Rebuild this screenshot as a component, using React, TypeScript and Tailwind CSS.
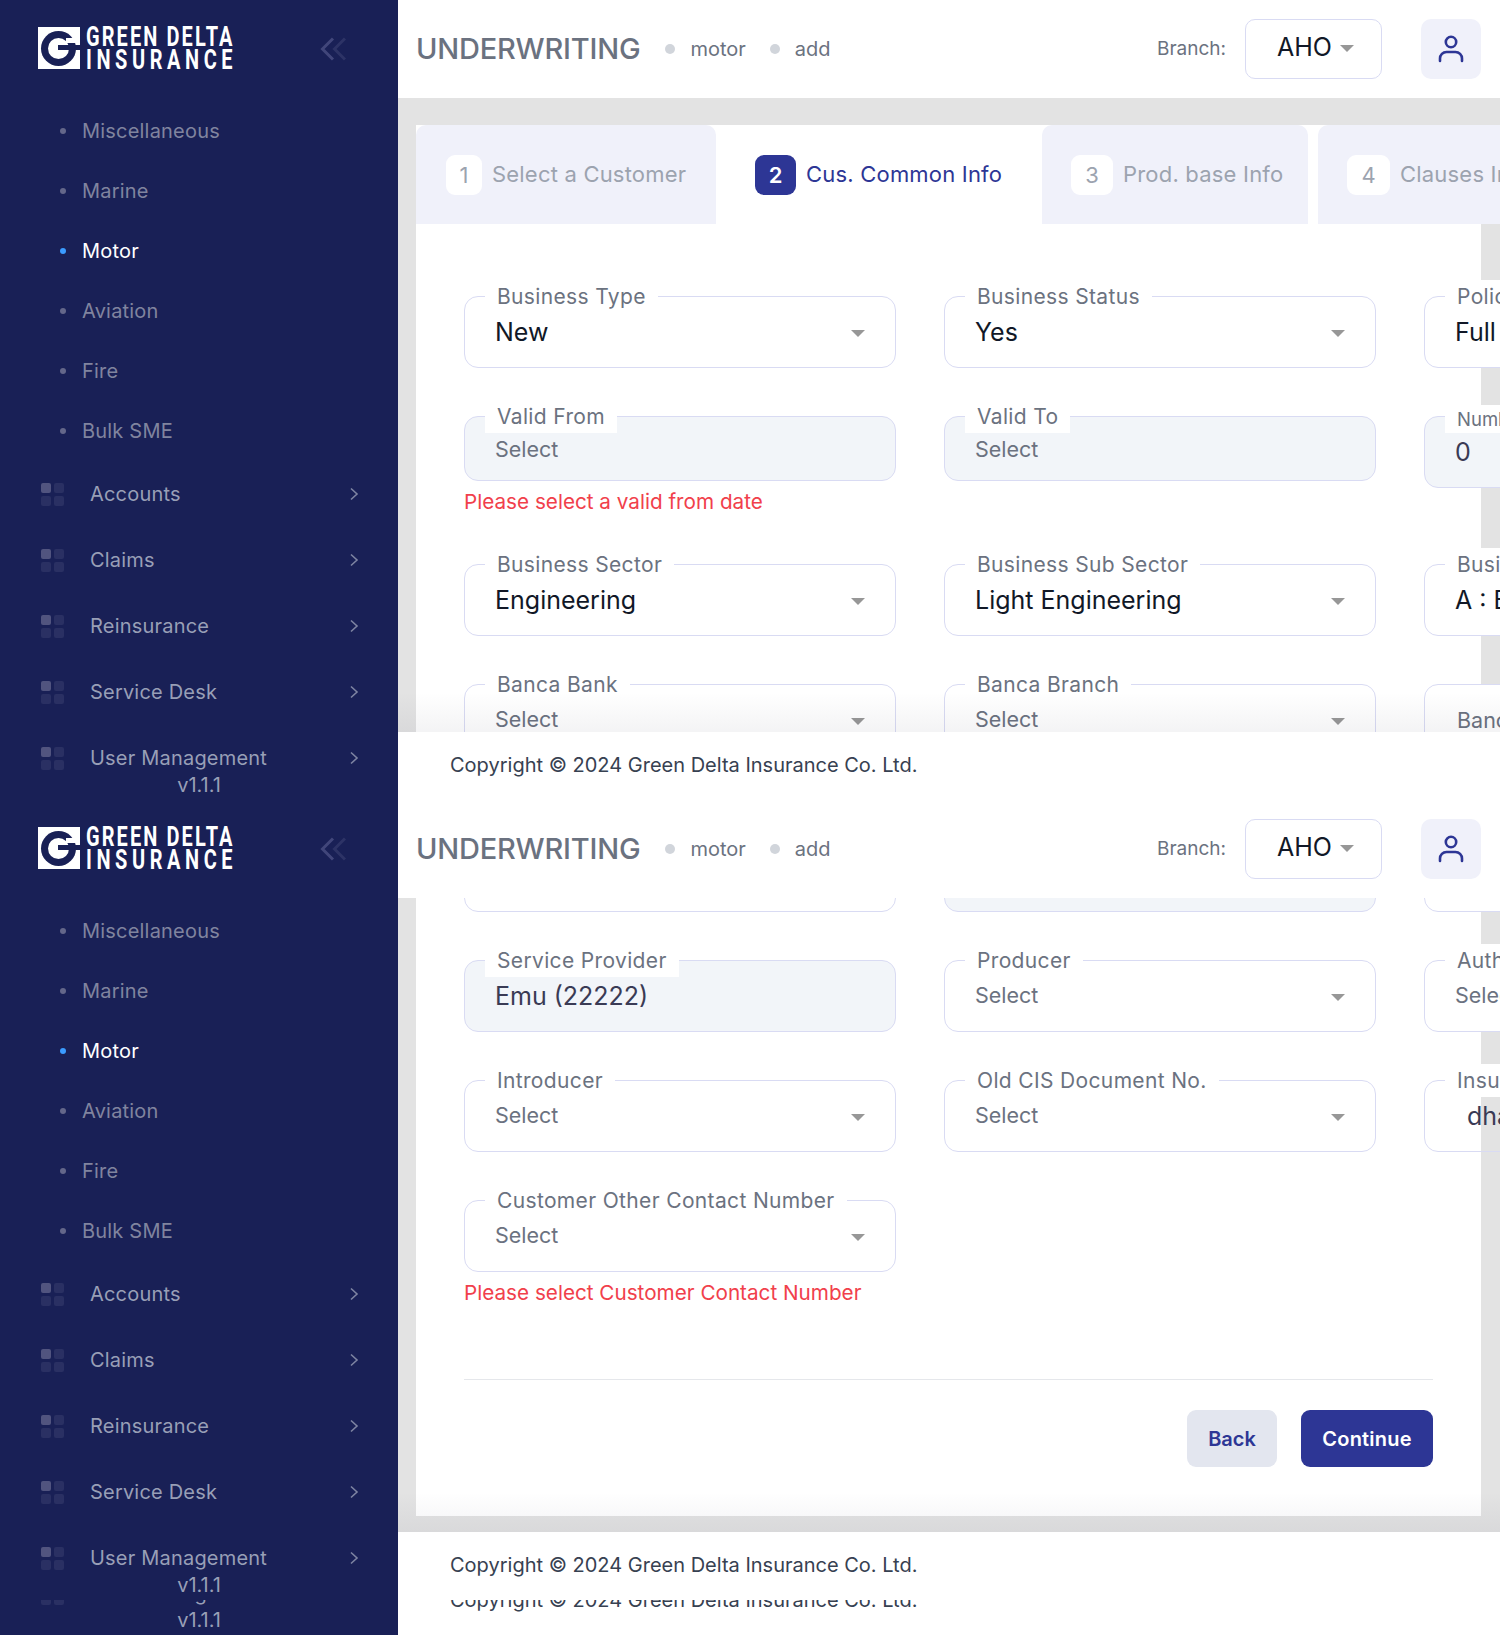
import React from "react";

const NAV_SUB = ["Miscellaneous", "Marine", "Motor", "Aviation", "Fire", "Bulk SME"];
const NAV_TOP = ["Accounts", "Claims", "Reinsurance", "Service Desk", "User Management"];

function Logo() {
  return (
    <svg width="197" height="44" viewBox="0 0 197 44" className="block shrink-0">
      <rect x="0" y="1" width="42" height="42" fill="#fff" />
      <circle cx="20.5" cy="22.5" r="17.5" fill="#192056" />
      <circle cx="20.5" cy="22.5" r="10.5" fill="#fff" />
      <rect x="20" y="19" width="22" height="5" fill="#192056" />
      <rect x="28" y="12" width="14" height="5" fill="#fff" />
      <text transform="translate(48 20) scale(0.74 1)" fontFamily="Roboto, sans-serif" fontWeight="700" fontSize="27" fill="#fff" textLength="198" lengthAdjust="spacing">GREEN DELTA</text>
      <text transform="translate(48 43) scale(0.74 1)" fontFamily="Roboto, sans-serif" fontWeight="700" fontSize="27" fill="#fff" textLength="198" lengthAdjust="spacing">INSURANCE</text>
    </svg>
  );
}

function GridIcon() {
  return (
    <div className="grid grid-cols-[10px_10px] gap-[3px] shrink-0">
      <span className="h-[10px] rounded-[2px] bg-[#51547f]" />
      <span className="h-[10px] rounded-[2px] bg-[#2a3063]" />
      <span className="h-[10px] rounded-[2px] bg-[#2a3063]" />
      <span className="h-[10px] rounded-[2px] bg-[#2a3063]" />
    </div>
  );
}

function Sidebar() {
  return (
    <aside className="w-[398px] h-[800px] shrink-0 bg-[#192056] flex flex-col overflow-hidden">
      <div className="h-[101px] pl-[38px] pr-[52px] pt-[26px] flex items-start justify-between shrink-0">
        <Logo />
        <svg width="26" height="24" viewBox="0 0 26 24" className="mt-[11px]" fill="none" strokeWidth="3">
          <path d="M13 1.5 2.5 12 13 22.5" stroke="#41467a" />
          <path d="M25 1.5 14.5 12 25 22.5" stroke="#2d3366" />
        </svg>
      </div>
      <ul className="pl-[60px]">
        {NAV_SUB.map((t) => (
          <li key={t} className={"h-[60px] flex items-center gap-[16px] text-[20px] tracking-[0.2px] " + (t === "Motor" ? "text-white" : "text-[#80849f]")}>
            <span className={"w-[6px] h-[6px] rounded-full " + (t === "Motor" ? "bg-[#3b9bff]" : "bg-[#64678a]")} />
            {t}
          </li>
        ))}
      </ul>
      <ul className="pl-[41px] pr-[39px]">
        {NAV_TOP.map((t) => (
          <li key={t} className="h-[66px] flex items-center text-[20px] tracking-[0.2px] text-[#989fb6]">
            <GridIcon />
            <span className="ml-[26px] flex-1">{t}</span>
            <svg width="10" height="14" viewBox="0 0 10 14" fill="none" stroke="#7e84a2" strokeWidth="1.6">
              <path d="M2 1.5 8 7l-6 5.5" />
            </svg>
          </li>
        ))}
      </ul>
      <div className="w-[398px] text-center text-[20px] leading-[24px] text-[#989fb6] -mt-[18px]">v1.1.1</div>
    </aside>
  );
}

function Caret({ className = "" }: { className?: string }) {
  return (
    <svg width="14" height="7" viewBox="0 0 14 7" className={"shrink-0 " + className}>
      <path d="M0 0h14L7 7z" fill="#979797" />
    </svg>
  );
}

function Header() {
  return (
    <header className="h-[98px] shrink-0 bg-white flex items-center pl-[18px] pr-[19px]">
      <h1 className="text-[29px] font-medium text-[#6b7280] leading-none -tracking-[0.2px] pb-[2px]">UNDERWRITING</h1>
      <span className="ml-[25px] w-[10px] h-[10px] rounded-full bg-[#d1d5db]" />
      <span className="ml-[15px] text-[20px] text-[#6b7280]">motor</span>
      <span className="ml-[24px] w-[10px] h-[10px] rounded-full bg-[#d1d5db]" />
      <span className="ml-[15px] text-[20px] text-[#6b7280]">add</span>
      <span className="ml-auto text-[19px] text-[#6b7280]">Branch:</span>
      <div className="ml-[19px] w-[137px] h-[60px] rounded-[10px] border border-[#d9dbf3] flex items-center pl-[31px] gap-[8px] pb-[2px]">
        <span className="text-[25px] text-[#111827]">AHO</span>
        <Caret />
      </div>
      <div className="ml-[39px] w-[60px] h-[60px] rounded-[10px] bg-[#f0f1fa] flex items-center justify-center">
        <svg width="26" height="28" viewBox="0 0 26 28" fill="none" stroke="#2d3695" strokeWidth="2.6" strokeLinecap="round">
          <circle cx="13" cy="7" r="5.2" />
          <path d="M2 26v-2.5A6.5 6.5 0 0 1 8.5 17h9a6.5 6.5 0 0 1 6.5 6.5V26" />
        </svg>
      </div>
    </header>
  );
}

type FieldProps = {
  label?: string;
  value?: string;
  placeholder?: string;
  disabled?: boolean;
  arrow?: boolean;
  h?: string;
  error?: string;
  small?: boolean;
};

function Field({ label, value, placeholder, disabled, arrow = true, h = "h-[72px]", error, small }: FieldProps) {
  return (
    <div className="w-[432px]">
      <div className={"relative w-full rounded-[14px] border border-[#d9dbf3] flex items-center pl-[30px] pr-[30px] " + h + " " + (disabled ? "bg-[#f2f5f9]" : "bg-white")}>
        {label && (
          <span className={"absolute left-[20px] px-[12px] bg-white text-[#6b7280] whitespace-nowrap " + (small ? "text-[18.5px] leading-[28px] top-[-12px]" : "top-[-17px] text-[21px] tracking-[0.35px] leading-[33px]")}>
            {label}
          </span>
        )}
        {value ? (
          <span className={"flex-1 text-[25px] pt-[2px] " + (disabled ? "text-[#3a3b55]" : "text-[#111827]")}>{value}</span>
        ) : (
          <span className={"flex-1 text-[21.5px] text-[#6b7280] " + (disabled ? "pt-[1px]" : "pb-[2px]")}>{placeholder}</span>
        )}
        {arrow && <Caret className="mt-[2px]" />}
      </div>
      {error && <p className="mt-[6px] text-[20.7px] leading-[29px] text-[#f1404b]">{error}</p>}
    </div>
  );
}

function Tab({ n, text, active, w, pl, bw }: { n: number; text: string; active?: boolean; w: string; pl: string; bw: string }) {
  return (
    <div className={"h-[99px] shrink-0 flex items-start pt-[30px] gap-[10px] rounded-t-[10px] " + w + " " + pl + " " + (active ? "bg-white" : "bg-[#f0f1fa]")}>
      <span className={"h-[40px] rounded-[9px] flex items-center justify-center text-[22px] shrink-0 " + bw + " " + (active ? "bg-[#2d3695] text-white font-semibold" : "bg-white text-[#9ca3af]")}>
        {n}
      </span>
      <span className={"leading-[38px] text-[22px] tracking-[0.2px] whitespace-nowrap " + (active ? "text-[#2d3695]" : "text-[#9ca3af]")}>{text}</span>
    </div>
  );
}

function Footer() {
  return (
    <footer className="relative h-[68px] shrink-0 bg-white flex items-center pl-[52px]">
      <div className="absolute left-0 right-0 bottom-full h-[40px] bg-gradient-to-b from-transparent to-[#1e1e3c0d]" />
      <span className="text-[20px] text-[#374151] pb-[2px]">Copyright © 2024 Green Delta Insurance Co. Ltd.</span>
    </footer>
  );
}

function Rows({ children }: { children: React.ReactNode }) {
  return <div className="grid grid-cols-[432px_432px_432px] gap-x-[48px] gap-y-[48px] items-start w-max">{children}</div>;
}

function FirstBody() {
  return (
    <div className="flex-1 min-h-0 overflow-hidden bg-[#e3e3e3] pt-[27px] pl-[18px] pr-[19px]">
      <div className="bg-white h-[800px]">
        <div className="flex w-max">
          <Tab n={1} text="Select a Customer" w="w-[300px]" pl="pl-[30px]" bw="w-[36px]" />
          <Tab n={2} text="Cus. Common Info" active w="w-[326px]" pl="pl-[39px]" bw="w-[41px]" />
          <Tab n={3} text="Prod. base Info" w="w-[266px]" pl="pl-[29px]" bw="w-[42px]" />
          <div className="w-[10px]" />
          <Tab n={4} text="Clauses Info" w="w-[400px]" pl="pl-[29px]" bw="w-[43px]" />
        </div>
        <div className="pt-[72px] pl-[48px]">
          <Rows>
            <Field label="Business Type" value="New" />
            <Field label="Business Status" value="Yes" />
            <Field label="Policy Type" value="Full Cover" />
            <Field label="Valid From" placeholder="Select" disabled arrow={false} h="h-[65px]" error="Please select a valid from date" />
            <Field label="Valid To" placeholder="Select" disabled arrow={false} h="h-[65px]" />
            <Field label="Number of Days" value="0" disabled arrow={false} small />
            <Field label="Business Sector" value="Engineering" />
            <Field label="Business Sub Sector" value="Light Engineering" />
            <Field label="Business Class" value="A : Engineering" />
            <Field label="Banca Bank" placeholder="Select" />
            <Field label="Banca Branch" placeholder="Select" />
            <div className="w-[432px] h-[72px] rounded-[14px] border border-[#d9dbf3] bg-white flex items-center pl-[32px] text-[21.5px] text-[#6b7280]">Banca Officer</div>
          </Rows>
        </div>
      </div>
    </div>
  );
}

function SecondBody() {
  return (
    <div className="flex-1 min-h-0 overflow-hidden bg-[#e3e3e3] pl-[18px] pr-[19px] pb-[16px]">
      <div className="bg-white h-full pl-[48px] pr-[48px] flow-root">
        <div className="-mt-[58px]">
          <Rows>
            <Field />
            <Field disabled arrow={false} />
            <Field />
            <Field label="Service Provider" value="Emu (22222)" disabled arrow={false} />
            <Field label="Producer" placeholder="Select" />
            <Field label="Authorized Person" placeholder="Select" />
            <Field label="Introducer" placeholder="Select" />
            <Field label="Old CIS Document No." placeholder="Select" />
            <div className="relative w-[432px] h-[72px] rounded-[14px] border border-[#d9dbf3] flex items-center pl-[42px]">
              <span className="absolute left-[20px] top-[-17px] px-[12px] bg-white text-[#6b7280] text-[21px] tracking-[0.35px] leading-[33px] whitespace-nowrap">Insured Name</span>
              <span className="text-[25px] text-[#3a3b55] pt-[2px]">dhaka</span>
            </div>
            <Field label="Customer Other Contact Number" placeholder="Select" error="Please select Customer Contact Number" />
          </Rows>
        </div>
        <div className="mt-[72px] border-t-[1.5px] border-[#e5e7eb] pt-[30px] flex justify-end gap-[24px]">
          <button className="w-[90px] h-[57px] rounded-[9px] bg-[#e3e6ef] text-[#2d3695] text-[20px] font-semibold">Back</button>
          <button className="w-[132px] h-[57px] rounded-[9px] bg-[#2d3695] text-white text-[20px] tracking-[0.2px] font-semibold">Continue</button>
        </div>
      </div>
    </div>
  );
}

export default function App() {
  return (
    <div className="w-[1500px] h-[1635px] overflow-hidden bg-white font-['Inter',sans-serif]">
      <section className="h-[800px] flex overflow-hidden">
        <Sidebar />
        <main className="w-[1102px] flex flex-col overflow-hidden">
          <Header />
          <FirstBody />
          <Footer />
        </main>
      </section>
      <section className="h-[800px] flex overflow-hidden">
        <Sidebar />
        <main className="w-[1102px] flex flex-col overflow-hidden">
          <Header />
          <SecondBody />
          <Footer />
        </main>
      </section>
      <section className="h-[35px] overflow-hidden">
        <div className="-mt-[765px] h-[800px] flex">
          <Sidebar />
          <main className="w-[1102px] flex flex-col justify-end">
            <Footer />
          </main>
        </div>
      </section>
    </div>
  );
}
